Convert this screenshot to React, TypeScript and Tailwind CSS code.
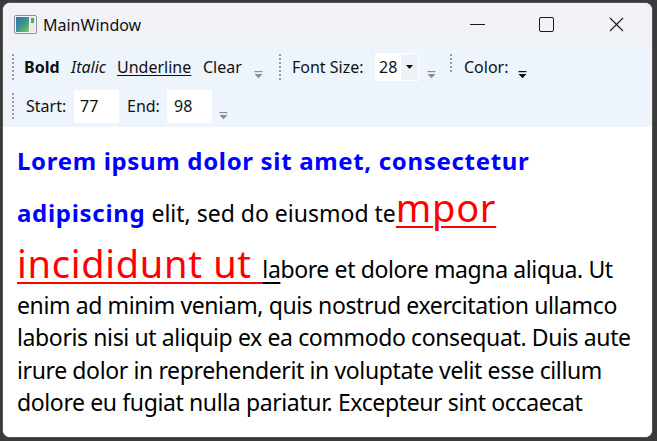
import React from 'react';

const FONT = '"Noto Sans", "Open Sans", sans-serif';

function Grip({ dots }: { dots: number }) {
  return (
    <div className="flex flex-col gap-[2px] w-[3px]">
      {Array.from({ length: dots }).map((_, i) => (
        <div key={i} className="w-[2px] h-[2px] bg-[#9a9a9a]" />
      ))}
    </div>
  );
}

function Overflow({ dark, className }: { dark?: boolean; className?: string }) {
  const c = dark ? '#111111' : '#8c8c8c';
  return (
    <svg width="9" height="8" viewBox="0 0 9 8" className={className}>
      <rect x="0.5" y="0" width="8" height="1.2" fill={c} />
      <path d="M0.5 3 H8.5 L4.5 7.2 Z" fill={c} />
    </svg>
  );
}

function AppIcon() {
  return (
    <svg width="23" height="19" viewBox="0 0 23 19">
      <defs>
        <linearGradient id="ig" x1="0" y1="0" x2="1" y2="1">
          <stop offset="0" stopColor="#2f6fb3" />
          <stop offset="0.55" stopColor="#3d9a8a" />
          <stop offset="1" stopColor="#8cc65c" />
        </linearGradient>
      </defs>
      <rect x="0.5" y="0.5" width="22" height="18" rx="1.5" fill="#f4f6f8" stroke="#8a9099" />
      <rect x="2" y="2" width="13" height="15" fill="url(#ig)" />
      <rect x="16" y="2" width="5" height="15" fill="#e8ebee" />
      <rect x="17" y="3" width="3" height="5" fill="#55a86c" />
    </svg>
  );
}

export default function App() {
  return (
    <div className="w-[657px] h-[441px] bg-[#3a3a3a] pt-[2px] pl-[2px] overflow-hidden" style={{ fontFamily: FONT }}>
      <div className="w-[651px] h-[436px] rounded-[8px] overflow-hidden bg-white flex flex-col border-[0.5px] border-[#555]">
        {/* title bar */}
        <div className="h-[42px] bg-[#f0f2f8] flex items-center shrink-0">
          <div className="ml-[11px] mt-[1px]">
            <AppIcon />
          </div>
          <span className="ml-[6px] text-[16px] leading-[20px] text-[#111] mt-[1px]">MainWindow</span>
          <div className="ml-auto flex items-center h-full">
            <div className="w-[69px] h-full flex items-center justify-center">
              <div className="w-[15px] h-[1px] bg-[#1a1a1a] mt-[1px]" />
            </div>
            <div className="w-[69px] h-full flex items-center justify-center">
              <div className="w-[15px] h-[15px] border border-[#1a1a1a] rounded-[2px]" />
            </div>
            <div className="w-[71px] h-full flex items-center justify-center">
              <svg width="15" height="15" viewBox="0 0 15 15">
                <path d="M1 1 L14 14 M14 1 L1 14" stroke="#1a1a1a" strokeWidth="1.1" />
              </svg>
            </div>
          </div>
        </div>

        {/* toolbar tray */}
        <div className="h-[82px] bg-[#eef4fc] shrink-0 text-[16px] leading-[22px] text-[#111]">
          <div className="mt-[3px] h-[38px] flex items-center">
            <div className="ml-[9px]"><Grip dots={7} /></div>
            <span className="ml-[9px] w-[47px] font-bold">Bold</span>
            <span className="w-[46px] italic">Italic</span>
            <span className="w-[86px] underline underline-offset-[2px]">Underline</span>
            <span className="w-[51px]">Clear</span>
            <Overflow className="self-end mb-[7px]" />
            <div className="ml-[16px]"><Grip dots={7} /></div>
            <span className="ml-[10px] w-[83px]">Font Size:</span>
            <div className="w-[44px] h-[28px] bg-white flex items-center">
              <span className="ml-[4px] w-[22px]">28</span>
              <div className="w-[17px] h-[26px] bg-[#edf2f9] flex items-center justify-center">
                <svg width="7" height="4" viewBox="0 0 7 4"><path d="M0 0 H7 L3.5 4 Z" fill="#111" /></svg>
              </div>
            </div>
            <Overflow className="ml-[8px] self-end mb-[7px]" />
            <div className="ml-[14px] self-start mt-[6px]"><Grip dots={5} /></div>
            <span className="ml-[11px] w-[54px]">Color:</span>
            <Overflow dark className="self-end mb-[7px]" />
          </div>
          <div className="h-[40px] flex items-center">
            <div className="ml-[9px]"><Grip dots={7} /></div>
            <span className="ml-[11px] w-[48px]">Start:</span>
            <div className="w-[45px] h-[33px] bg-white flex items-center">
              <span className="ml-[6px]">77</span>
            </div>
            <span className="ml-[8px] w-[40px]">End:</span>
            <div className="w-[45px] h-[33px] bg-white flex items-center">
              <span className="ml-[7px]">98</span>
            </div>
            <Overflow className="ml-[7px] self-end mb-[6px]" />
          </div>
        </div>

        {/* rich text */}
        <div className="flex-1 bg-white pt-[17px] pl-[14px] text-[23px] tracking-[-0.38px] leading-[34px] text-black whitespace-nowrap">
          <div className="h-[52px]">
            <span className="text-[24px] tracking-[0.67px] font-bold text-[#0000ff]">Lorem ipsum dolor sit amet, consectetur</span>
          </div>
          <div className="h-[56px]">
            <span className="text-[24px] tracking-[0.7px] font-bold text-[#0000ff]">adipiscing</span>
            <span className="tracking-[0px]"> elit, sed do eiusmod te</span>
            <span className="text-[38px] tracking-[0.7px] leading-[20px] text-[#ff0000] underline decoration-2 underline-offset-[4px]">mpor</span>
          </div>
          <div className="h-[36px]">
            <span className="text-[38px] tracking-[0.7px] leading-[20px] text-[#ff0000] underline decoration-2 underline-offset-[4px]">incididunt ut </span>
            <span className="underline decoration-2 underline-offset-[4px]">la</span>bore et dolore magna aliqua. Ut
          </div>
          <div className="h-[32px]">enim ad minim veniam, quis nostrud exercitation ullamco</div>
          <div className="h-[33px]">laboris nisi ut aliquip ex ea commodo consequat. Duis aute</div>
          <div className="h-[32px]">irure dolor in reprehenderit in voluptate velit esse cillum</div>
          <div className="h-[32px]">dolore eu fugiat nulla pariatur. Excepteur sint occaecat</div>
        </div>
      </div>
    </div>
  );
}
